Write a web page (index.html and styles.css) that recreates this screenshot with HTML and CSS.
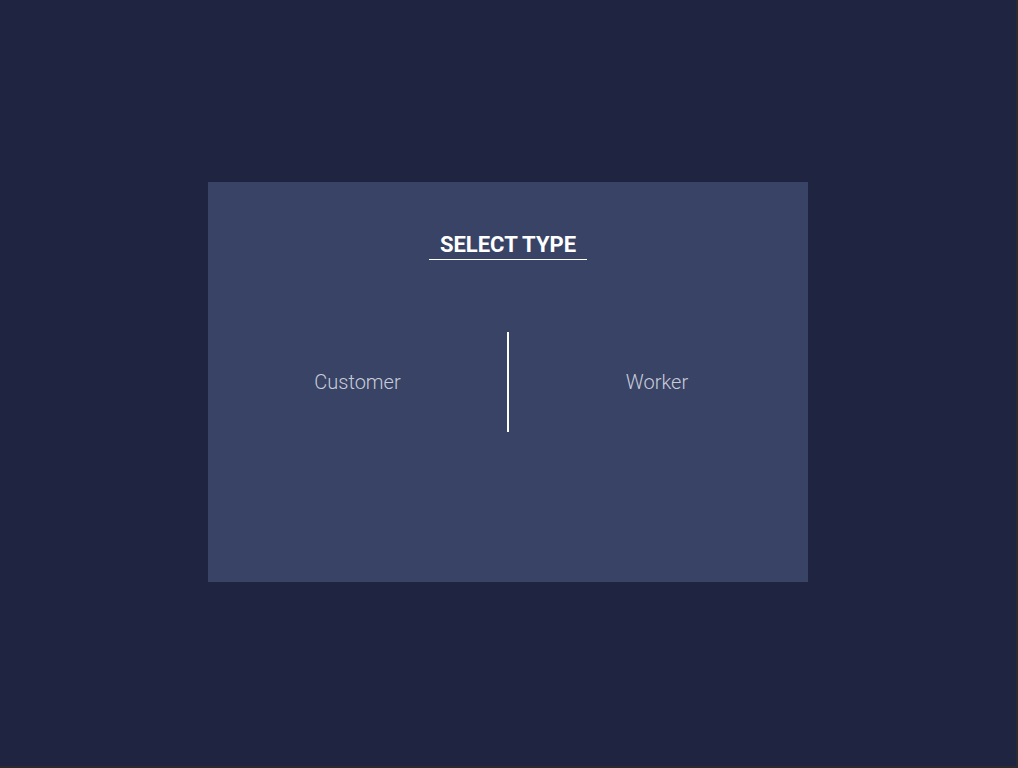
FILE: index.html
```html
<!DOCTYPE html>
<html>
<head>
<meta charset="utf-8">
<link rel="stylesheet" href="styles.css">
</head>
<body>
<div class="stage">
  <div class="card">
    <div class="title-wrap"><h1 class="title">SELECT TYPE</h1></div>
    <div class="choices">
      <div class="choice">Customer</div>
      <div class="divider"></div>
      <div class="choice choice-right">Worker</div>
    </div>
  </div>
</div>
</body>
</html>
```
FILE: styles.css
```css
html, body {
  margin: 0;
  padding: 0;
  background: #2b2b2e;
}
body {
  width: 1018px;
  height: 768px;
  overflow: hidden;
  font-family: Roboto, "Liberation Sans", sans-serif;
}
.stage {
  width: 1016px;
  height: 766px;
  background: #1f2440;
  display: flex;
  justify-content: center;
  padding-top: 182px;
  box-sizing: border-box;
}
.card {
  width: 600px;
  height: 400px;
  background: #384366;
  box-sizing: border-box;
  padding-top: 50px;
}
.title-wrap {
  display: flex;
  justify-content: center;
}
.title {
  margin: 0;
  font-size: 22px;
  line-height: 26px;
  font-weight: 700;
  color: #ffffff;
  padding: 0 11px 1px;
  border-bottom: 1px solid #ffffff;
}
.choices {
  margin-top: 72px;
  display: grid;
  grid-template-columns: 1fr 2px 1fr;
  height: 100px;
}
.choice {
  display: flex;
  align-items: center;
  justify-content: center;
  font-size: 20px;
  font-weight: 300;
  color: #c9ccd8;
}
.choice-right {
  padding-right: 3px;
}
.divider {
  background: #ffffff;
}
```
